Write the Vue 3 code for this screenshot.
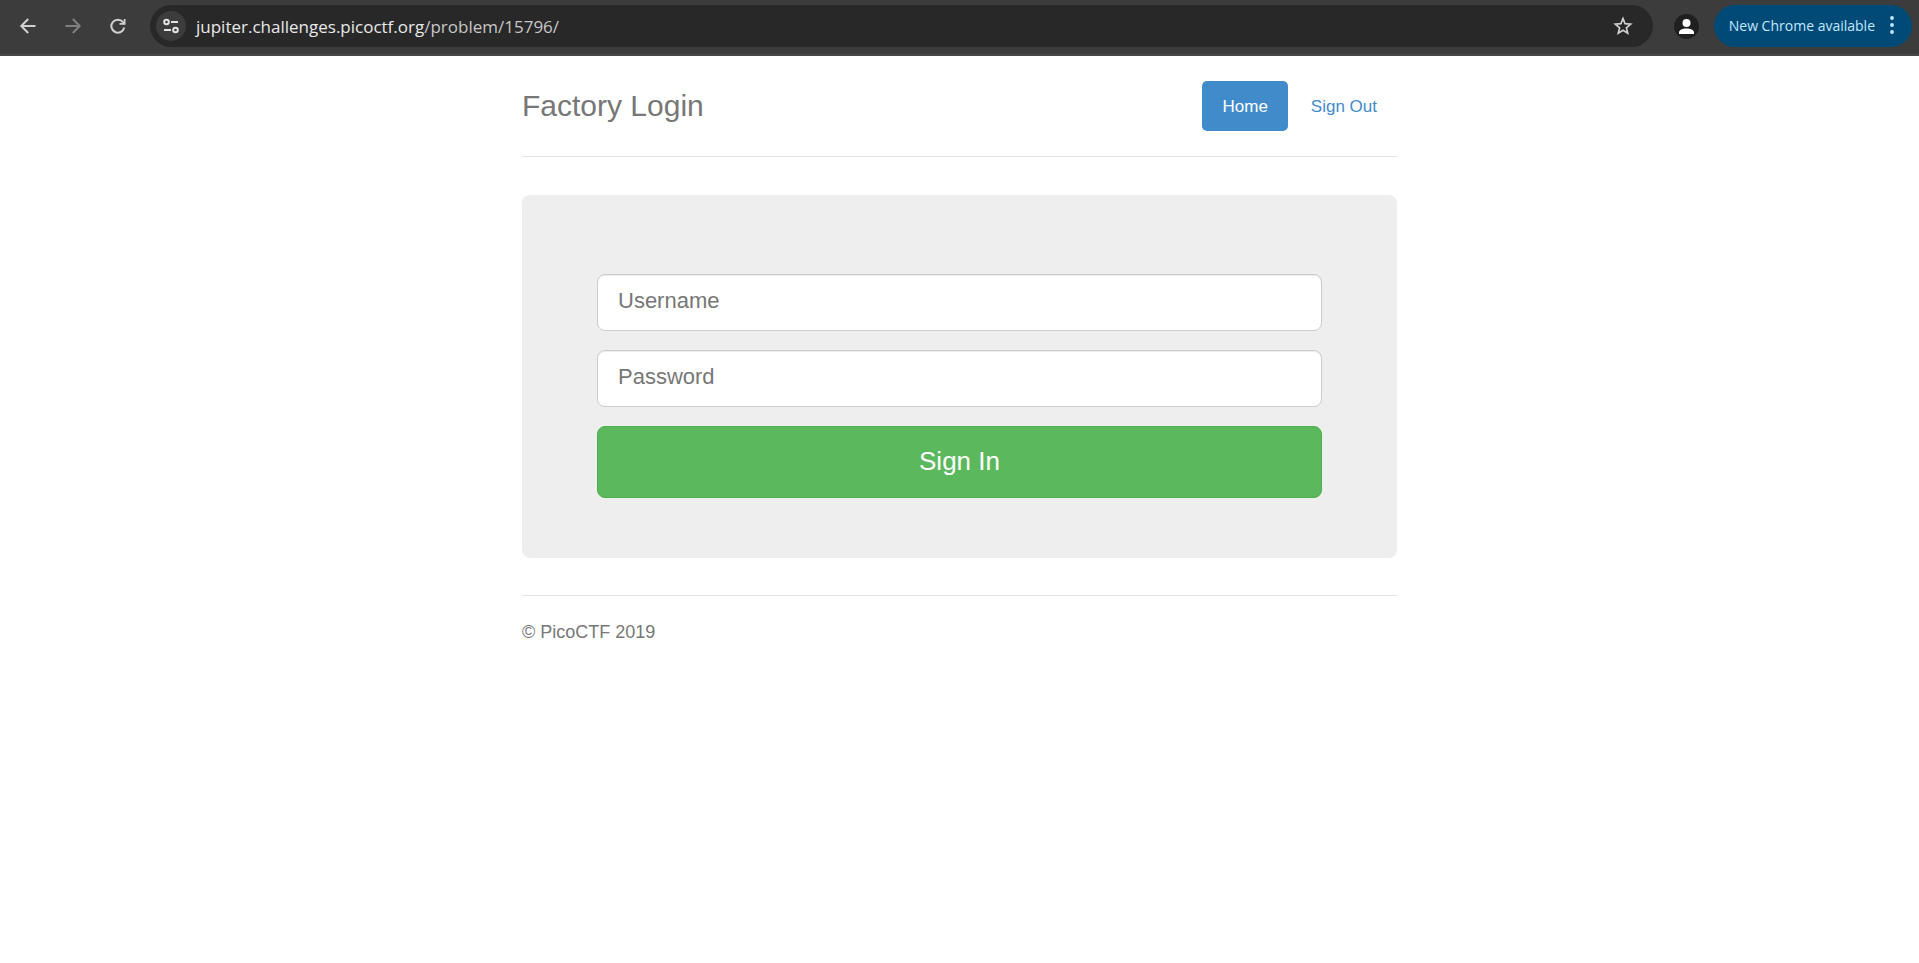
<script setup>
import { ref } from 'vue'

const username = ref('')
const password = ref('')
</script>

<template>
  <div class="window">
    <header class="toolbar">
      <div class="nav-buttons">
        <button type="button" class="icon-button" aria-label="Back">
          <svg width="20" height="20" viewBox="0 0 20 20" fill="none" stroke="#d0d0d0" stroke-width="2">
            <path d="M17.500 10H3.500M10.200 3L3.300 10l6.900 7" />
          </svg>
        </button>
        <button type="button" class="icon-button" aria-label="Forward">
          <svg width="20" height="20" viewBox="0 0 20 20" fill="none" stroke="#808080" stroke-width="2">
            <path d="M2.500 10H16.500M9.800 3l6.900 7-6.900 7" />
          </svg>
        </button>
        <button type="button" class="icon-button" aria-label="Reload">
          <svg width="20" height="20" viewBox="0 0 20 20" fill="none" stroke="#d0d0d0" stroke-width="2">
            <path d="M16.200 11.500A6.500 6.500 0 1 1 15 6.200L16.500 8" />
            <path d="M17.500 3V8.800H11.500V7h4.200V3z" fill="#d0d0d0" stroke="none" />
          </svg>
        </button>
      </div>
      <div class="omnibox">
        <button type="button" class="site-info" aria-label="View site information">
          <svg width="18" height="18" viewBox="0 0 18 18" fill="none" stroke="#e3e3e3" stroke-width="2">
            <circle cx="4.500" cy="5" r="2.300" />
            <path d="M9 5h7M2 13h7" />
            <circle cx="13.500" cy="13" r="2.300" />
          </svg>
        </button>
        <div class="url"><span class="host">jupiter.challenges.picoctf.org</span>/problem/15796/</div>
        <button type="button" class="icon-button" aria-label="Bookmark this tab">
          <svg width="20" height="20" viewBox="0 0 20 20" fill="none" stroke="#d0d0d0" stroke-width="1.700">
            <path d="M10 2.600l2.100 5.100 5.500.5-4.200 3.600 1.300 5.400-4.700-2.900-4.700 2.900 1.300-5.400-4.200-3.600 5.500-.5z" />
          </svg>
        </button>
      </div>
      <button type="button" class="profile" aria-label="Profile">
        <svg width="25" height="25" viewBox="0 0 25 25" fill="#fff">
          <circle cx="12.500" cy="9" r="4" />
          <path d="M5 20v-1.500C5 15.600 9 14.500 12.500 14.500S20 15.600 20 18.500V20z" />
        </svg>
      </button>
      <button type="button" class="update">
        New Chrome available
        <svg width="4" height="18" viewBox="0 0 4 18" fill="#c2e7ff">
          <circle cx="2" cy="2" r="1.900" />
          <circle cx="2" cy="9" r="1.900" />
          <circle cx="2" cy="16" r="1.900" />
        </svg>
      </button>
    </header>

    <div class="container">
      <div class="header">
        <h3>Factory Login</h3>
        <nav>
          <a href="#" class="active">Home</a>
          <a href="#">Sign Out</a>
        </nav>
      </div>

      <main class="panel">
        <form @submit.prevent>
          <input v-model="username" type="text" placeholder="Username" aria-label="Username" />
          <input v-model="password" type="password" placeholder="Password" aria-label="Password" />
          <button type="submit" class="submit">Sign In</button>
        </form>
      </main>

      <footer>© PicoCTF 2019</footer>
    </div>
  </div>
</template>

<style>
body {
  margin: 0;
  background: #fff;
}
</style>

<style scoped>
.window,
.window * {
  box-sizing: border-box;
}

.window {
  font-family: "Liberation Sans", Arial, sans-serif;
  font-size: 17px;
  line-height: 25px;
}

button {
  border: 0;
  padding: 0;
  background: none;
  font-family: inherit;
  cursor: pointer;
}

.toolbar {
  display: flex;
  align-items: center;
  padding: 5px 7px 7px 18px;
  background: #3c3c3c;
  border-bottom: 2px solid #474747;
  font-family: "Open Sans", "Noto Sans", sans-serif;
}

.nav-buttons {
  display: flex;
  gap: 25px;
  margin-right: 22px;
}

.icon-button {
  display: flex;
}

.omnibox {
  display: flex;
  flex: 1;
  align-items: center;
  height: 42px;
  padding: 0 20px 0 6px;
  border-radius: 21px;
  background: #282828;
}

.site-info {
  display: flex;
  align-items: center;
  justify-content: center;
  width: 30px;
  height: 30px;
  margin-right: 10px;
  border-radius: 50%;
  background: #3c3c3c;
}

.url {
  flex: 1;
  color: #c7c7c7;
  font-size: 17px;
}

.host {
  color: #e8e8e8;
}

.profile {
  display: flex;
  margin: 0 15px 0 21px;
  border-radius: 50%;
  background: #1f1f1f;
}

.update {
  display: flex;
  align-items: center;
  gap: 15px;
  height: 42px;
  padding: 0 18px 2px 15px;
  border-radius: 21px;
  background: #004a77;
  color: #c2e7ff;
  font-size: 14px;
}

.container {
  max-width: 875px;
  margin: 0 auto;
  padding-top: 25px;
}

.header {
  display: flex;
  align-items: center;
  justify-content: space-between;
  padding-bottom: 25px;
  margin-bottom: 38px;
  border-bottom: 1px solid #e5e5e5;
}

h3 {
  margin: 0;
  color: #777;
  font-size: 30px;
  font-weight: 400;
  line-height: 50px;
}

nav {
  display: flex;
  gap: 3px;
}

nav a {
  padding: 13px 20px 12px;
  border-radius: 5px;
  color: #428bca;
  text-decoration: none;
}

nav .active {
  background: #428bca;
  color: #fff;
}

.panel {
  padding: 79px 75px 60px;
  border-radius: 8px;
  background: #eee;
}

form {
  display: flex;
  flex-direction: column;
  gap: 19px;
}

input {
  width: 100%;
  height: 57px;
  padding: 11px 20px 14px;
  border: 1px solid #ccc;
  border-radius: 8px;
  background: #fff;
  box-shadow: inset 0 1px 1px rgba(0, 0, 0, 0.075);
  color: #555;
  font-family: inherit;
  font-size: 22px;
}

input::placeholder {
  color: #777;
}

.submit {
  height: 72px;
  padding-bottom: 2px;
  border: 1px solid #4cae4c;
  border-radius: 8px;
  background: #5cb85c;
  color: #fff;
  font-size: 26px;
}

footer {
  margin-top: 37px;
  padding-top: 24px;
  border-top: 1px solid #e5e5e5;
  color: #777;
  font-size: 18px;
}
</style>
